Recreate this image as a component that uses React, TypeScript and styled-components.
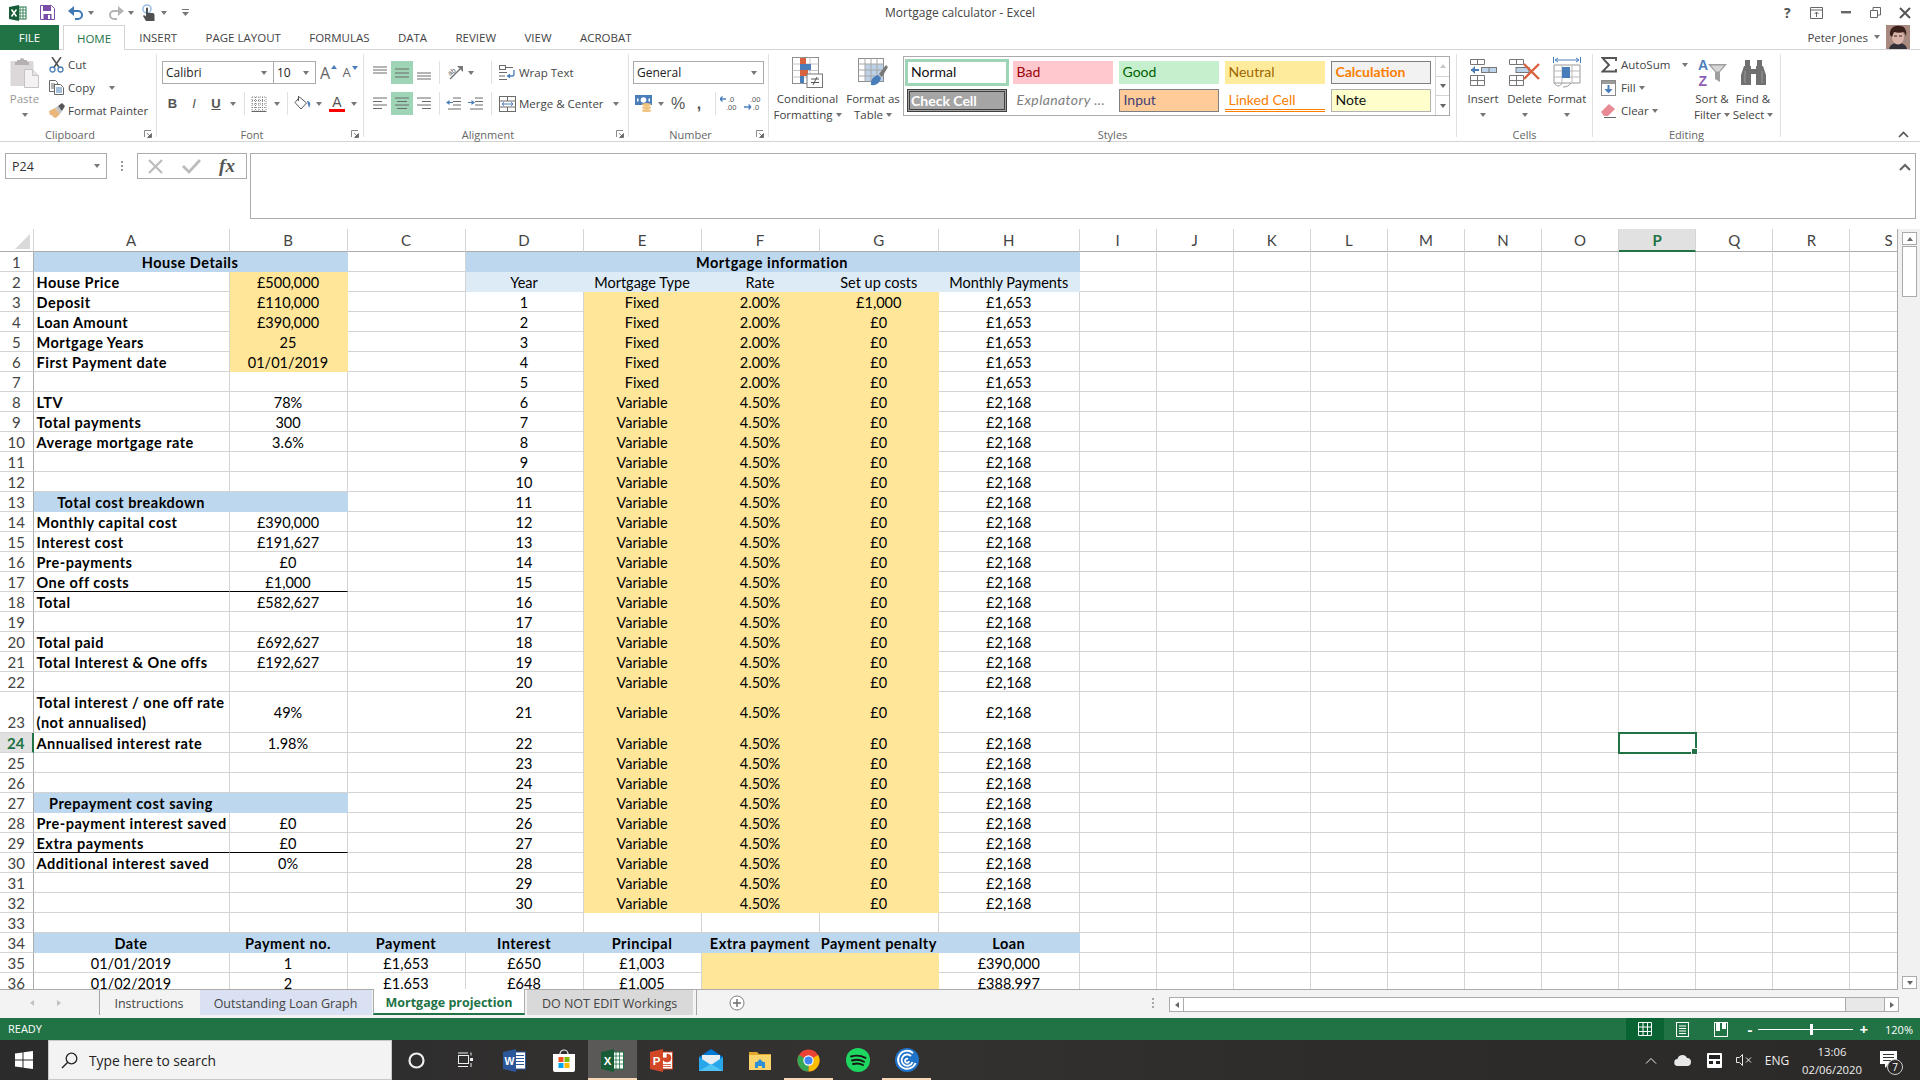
import React from "react";
import styled, { createGlobalStyle } from "styled-components";

const GlobalStyle = createGlobalStyle`
  html, body {
    margin: 0;
    padding: 0;
    width: 1920px;
    height: 1080px;
    overflow: hidden;
    background: #fff;
    font-family: "Open Sans", "Liberation Sans", sans-serif;
  }
  * { box-sizing: border-box; }
  svg { display: block; flex: none; }
`;

const GRID_LINE = "#d4d4d4";
const EDGE = "#ababab";
const GREEN = "#217346";
const INK = "#444";
const ICON_BLUE = "#4a7ebb";

/* ---------- icons ---------- */

const ExcelMark = () => (
  <svg width="18" height="16" viewBox="0 0 18 16">
    <rect x="8" y="2" width="9" height="12" fill="#fff" stroke={GREEN} />
    <path d="M11 2v12M14 2v12M8 5h9M8 8h9M8 11h9" stroke={GREEN} strokeWidth="0.8" />
    <path d="M0 2l10-2v16L0 14z" fill="#185c37" />
    <path d="M2.5 4.5l5 7M7.5 4.5l-5 7" stroke="#fff" strokeWidth="1.5" />
  </svg>
);

const SaveIcon = () => (
  <svg width="15" height="15" viewBox="0 0 15 15">
    <path d="M.5.5h11l3 3v11H.5z" fill="#fff" stroke="#7a4da8" />
    <rect x="3" y="1" width="8" height="5" fill="#7a4da8" />
    <rect x="3.5" y="9" width="8" height="5.5" fill="#7a4da8" />
    <rect x="8" y="10" width="2" height="4" fill="#fff" />
  </svg>
);

const ArrowBack = ({ color, flip }: { color: string; flip?: boolean }) => (
  <svg width="16" height="15" viewBox="0 0 16 15">
    <g transform={flip ? "translate(16 0) scale(-1 1)" : undefined}>
      <path d="M4 6h6a4 4 0 0 1 0 8H7" fill="none" stroke={color} strokeWidth="2" />
      <path d="M6 1v10L0 6z" fill={color} />
    </g>
  </svg>
);

const TouchIcon = () => (
  <svg width="15" height="18" viewBox="0 0 15 18">
    <circle cx="6" cy="5" r="4" fill="none" stroke="#9cc0e4" strokeWidth="1.6" />
    <path d="M5 4.5a1 1 0 0 1 2 0V9h4.5a2 2 0 0 1 2 2v6H5L2 12l1-1 2 1.5z" fill="#4f4f4f" />
  </svg>
);

const CustomizeMark = () => (
  <svg width="7" height="7" viewBox="0 0 7 7">
    <path d="M0 .5h7" stroke="#777" />
    <path d="M0 3h7L3.5 7z" fill="#777" />
  </svg>
);

const PasteIcon = () => (
  <svg width="29" height="30" viewBox="0 0 29 30">
    <rect x="0.5" y="3" width="23" height="25" rx="1" fill="#dcd8da" />
    <path d="M7 4V2h3a2 2 0 0 1 4 0h3v2h2v3H5V4z" fill="#b5b1b3" />
    <path d="M14.5 11.5h8l6 6v12h-14z" fill="#f4f2f3" stroke="#c6c3c5" />
    <path d="M22.5 11.5v6h6" fill="#e6e4e5" stroke="#c6c3c5" />
  </svg>
);

const CutIcon = () => (
  <svg width="15" height="16" viewBox="0 0 15 16">
    <path d="M3 0l7.5 11M12 0L4.5 11" stroke="#555" strokeWidth="1.6" />
    <circle cx="3.5" cy="12.5" r="2.5" fill="none" stroke={ICON_BLUE} strokeWidth="1.3" />
    <circle cx="11.5" cy="12.5" r="2.5" fill="none" stroke={ICON_BLUE} strokeWidth="1.3" />
  </svg>
);

const CopyIcon = () => (
  <svg width="15" height="15" viewBox="0 0 15 15">
    <path d="M.5.5h6l2 2v9H.5z" fill="#fff" stroke="#666" />
    <path d="M2 4h4M2 6h4M2 8h3" stroke="#666" />
    <path d="M5.5 4.5h6l3 3v7h-9z" fill="#fff" stroke="#666" />
    <path d="M7 8h6M7 10h6M7 12h6" stroke={ICON_BLUE} />
  </svg>
);

const BrushIcon = () => (
  <svg width="16" height="15" viewBox="0 0 16 15">
    <path d="M0 8l6-3 5 6-4 4-3-1-1-2-2 0z" fill="#e9b779" />
    <path d="M6 5l3-2 4 5-2 3z" fill="#c3c3c3" />
    <path d="M9 3l4-3 3 3-3 5z" fill="#555" />
  </svg>
);

const BordersIcon = () => (
  <svg width="16" height="16" viewBox="0 0 16 16">
    <path d="M1 1h14M1 8h14M1 15h14M1 1v14M8 1v14M15 1v14M4.5 1v14M11.5 1v14M1 4.5h14M1 11.5h14" stroke="#8a8a8a" strokeDasharray="1 1" />
    <path d="M.5 15.5h15" stroke="#666" />
  </svg>
);

const FillIcon = () => (
  <svg width="17" height="15" viewBox="0 0 17 15">
    <path d="M5.5 1L1 6.5 7 13l5.5-6z" fill="#fff" stroke="#555" />
    <path d="M4.5 0v5" stroke="#555" />
    <path d="M13 5a3 3 0 0 1 3 4l-1 3z" fill={ICON_BLUE} />
  </svg>
);

const AlignIcon = ({ lines }: { lines: [number, number, number][] }) => (
  <svg width="16" height="16" viewBox="0 0 16 16">
    {lines.map(([x1, x2, y]) => (
      <path key={`${x1}${y}`} d={`M${x1} ${y}h${x2 - x1}`} stroke="#6b6b6b" strokeWidth="1" />
    ))}
  </svg>
);

const OrientIcon = () => (
  <svg width="20" height="22" viewBox="0 0 20 22">
    <text x="3" y="12" fontSize="7" fill="#555" fontFamily="Liberation Sans" transform="rotate(-38 7 10)">ab</text>
    <path d="M5 17L16 6" stroke="#777" strokeWidth="1.5" />
    <path d="M12 4h6v6z" fill="#777" />
  </svg>
);

const IndentIcon = ({ dir }: { dir: "in" | "out" }) => (
  <svg width="16" height="14" viewBox="0 0 16 14">
    <path d="M7 1h8M7 4.5h8M7 8h8M2 12h13" stroke="#6b6b6b" />
    {dir === "out" ? (
      <path d="M7 5H3.5V3L0 5.5 3.5 8V6H7z" fill={ICON_BLUE} />
    ) : (
      <path d="M0 5h3.5V3L7 5.5 3.5 8V6H0z" fill={ICON_BLUE} />
    )}
  </svg>
);

const WrapIcon = () => (
  <svg width="17" height="16" viewBox="0 0 17 16">
    <rect x="0.5" y="0.5" width="6" height="4" fill="none" stroke="#6b6b6b" />
    <path d="M7 2.5h7M0 7.5h8M0 11h6M0 14.5h8" stroke="#6b6b6b" />
    <path d="M15 5v4a2 2 0 0 1-2 2h-3" fill="none" stroke={ICON_BLUE} strokeWidth="1.3" />
    <path d="M11 8.5v5L7.5 11z" fill={ICON_BLUE} />
  </svg>
);

const MergeIcon = () => (
  <svg width="17" height="16" viewBox="0 0 17 16">
    <rect x="0.5" y="0.5" width="16" height="15" fill="#fff" stroke="#6b6b6b" />
    <path d="M.5 5h16M.5 11h16M8.5.5V5M8.5 11v4.5" stroke="#6b6b6b" />
    <path d="M3 8h11M3 8l2-1.8M3 8l2 1.8M14 8l-2-1.8M14 8l-2 1.8" stroke={ICON_BLUE} fill="none" />
  </svg>
);

const CurrencyIcon = () => (
  <svg width="18" height="17" viewBox="0 0 18 17">
    <rect x="0" y="0" width="17" height="10" fill={ICON_BLUE} />
    <circle cx="8.5" cy="5" r="2.8" fill="#fff" />
    <rect x="2" y="3.5" width="1.5" height="3" fill="#fff" />
    <rect x="13.5" y="3.5" width="1.5" height="3" fill="#fff" />
    <ellipse cx="11.5" cy="9.5" rx="4.5" ry="1.5" fill="#efc27e" />
    <ellipse cx="11.5" cy="12.5" rx="4.5" ry="1.5" fill="#efc27e" />
    <ellipse cx="11.5" cy="15.5" rx="4.5" ry="1.5" fill="#efc27e" />
  </svg>
);

const DecimalIcon = ({ kind }: { kind: "more" | "less" }) => (
  <svg width="20" height="19" viewBox="0 0 20 19" fontFamily="Liberation Sans" fontSize="7.5" fill="#555">
    {kind === "more" ? (
      <>
        <path d="M0 5h6M0 5l2.5-2.5M0 5l2.5 2.5" stroke={ICON_BLUE} fill="none" strokeWidth="1.3" />
        <text x="8" y="8">.0</text>
        <text x="6" y="16">.00</text>
      </>
    ) : (
      <>
        <text x="6" y="8">.00</text>
        <path d="M0 13h7M7 13l-2.5-2.5M7 13l-2.5 2.5" stroke={ICON_BLUE} fill="none" strokeWidth="1.3" />
        <text x="9" y="16">.0</text>
      </>
    )}
  </svg>
);

const ConditionalIcon = () => (
  <svg width="31" height="31" viewBox="0 0 31 31">
    <rect x="0.5" y="0.5" width="26" height="26" fill="#fff" stroke="#8f8f8f" />
    <path d="M9 .5v26M18 .5v26M.5 7h26M.5 13.5h26M.5 20h26" stroke="#c4c4c4" />
    <rect x="8" y="1" width="6" height="6" fill="#d9633f" />
    <rect x="8" y="7" width="11" height="6" fill={ICON_BLUE} />
    <rect x="8" y="13" width="8" height="6" fill="#d9633f" />
    <rect x="8" y="19" width="4" height="7" fill={ICON_BLUE} />
    <rect x="15" y="17" width="15.5" height="13.5" fill="#fff" stroke="#777" />
    <path d="M19 22h8M19 25.5h8M25 20l-4 8" stroke="#555" />
  </svg>
);

const TableStyleIcon = () => (
  <svg width="30" height="29" viewBox="0 0 30 29">
    <rect x="0.5" y="0.5" width="25" height="23" fill="#fff" stroke="#8f8f8f" />
    <rect x="7" y="6" width="18" height="17" fill="#bcd0e6" />
    <path d="M7 .5v23M13 .5v23M19 .5v23M.5 6h25M.5 12h25M.5 18h25" stroke="#a8a8a8" />
    <path d="M13 25c0-5 4-7 7-8l3 3c-1 4-4 8-10 7z" fill={ICON_BLUE} />
    <path d="M21 16l7-9 2 2-6 10z" fill="#777" />
  </svg>
);

const InsertIcon = () => (
  <svg width="27" height="27" viewBox="0 0 27 27">
    <path d="M.5.5h14v5H.5zM7.5.5v5" fill="none" stroke="#777" />
    <path d="M.5 16.5h14v10H.5zM7.5 16.5v10M.5 21.5h14" fill="none" stroke="#777" />
    <rect x="11.5" y="8.5" width="15" height="5" fill="#bdd3ea" stroke="#777" />
    <path d="M19 8.5v5" stroke="#777" />
    <path d="M1 11h8" stroke={ICON_BLUE} strokeWidth="2" />
    <path d="M5 7v8l-4-4z" fill={ICON_BLUE} />
  </svg>
);

const DeleteIcon = () => (
  <svg width="31" height="27" viewBox="0 0 31 27">
    <path d="M.5.5h14v5H.5zM7.5.5v5" fill="none" stroke="#777" />
    <path d="M.5 16.5h14v10H.5zM7.5 16.5v10M.5 21.5h14" fill="none" stroke="#777" />
    <rect x="7" y="8.5" width="13" height="5" fill="#bdd3ea" stroke="#777" />
    <path d="M15 5l15 15M30 5L15 20" stroke="#d9633f" strokeWidth="2.4" />
  </svg>
);

const FormatCellIcon = () => (
  <svg width="28" height="31" viewBox="0 0 28 31">
    <path d="M2 3h24M2 3l3-2M2 3l3 2M26 3l-3-2M26 3l-3 2M.5 0v6M27.5 0v6" stroke={ICON_BLUE} fill="none" />
    <path d="M1 8h26v18H1z" fill="#fff" stroke="#999" />
    <path d="M9 8v18M19 8v18M1 14h26M1 20h26" stroke="#bbb" />
    <rect x="9" y="10" width="8" height="11" fill={ICON_BLUE} />
    <path d="M1 26c3 4 6 4 8 0M10 30c3 0 6-1 8-4" fill="none" stroke="#999" />
  </svg>
);

const SumIcon = () => (
  <svg width="16" height="16" viewBox="0 0 16 16">
    <path d="M15 4V1H1.5L8 8l-6.500 6.500H15V12" fill="none" stroke="#555" strokeWidth="1.9" />
  </svg>
);

const FillDownIcon = () => (
  <svg width="15" height="16" viewBox="0 0 15 16">
    <rect x="0.5" y="0.5" width="14" height="15" fill="#fff" stroke="#8a8a8a" />
    <rect x="1" y="1" width="13" height="3" fill="#9a9a9a" />
    <path d="M7.5 5v6" stroke={ICON_BLUE} strokeWidth="2" />
    <path d="M3.5 9h8l-4 4.5z" fill={ICON_BLUE} />
  </svg>
);

const EraserIcon = () => (
  <svg width="16" height="14" viewBox="0 0 16 14">
    <path d="M0 8l8-8 6 5-7 7H3z" fill="#e88a94" />
    <path d="M3 13.5h12" stroke="#666" />
  </svg>
);

const SortIcon = () => (
  <svg width="30" height="33" viewBox="0 0 30 33" fontFamily="Liberation Sans" fontWeight="700" fontSize="14">
    <text x="1" y="14" fill={ICON_BLUE}>A</text>
    <text x="1.5" y="30" fill="#8e5eb5">Z</text>
    <path d="M11 8h19l-7 8v10l-5-3v-7z" fill="#9e9e9e" />
    <path d="M14 9.5h13l-5 6h-3z" fill="#d6d6d6" />
  </svg>
);

const BinocularsIcon = () => (
  <svg width="25" height="27" viewBox="0 0 25 27">
    <path d="M4 1h5v6H4zM16 1h5v6h-5z" fill="#707070" />
    <path d="M3 7h7v3h5V7h7l3 9v10H15V15h-5v11H0V16z" fill="#707070" />
    <path d="M4 12v12M21 12v12" stroke="#9a9a9a" />
  </svg>
);

const Launcher = () => (
  <svg width="8" height="8" viewBox="0 0 8 8">
    <path d="M.5 7V.5H7" fill="none" stroke="#8a8a8a" />
    <path d="M3 3l3 3M7.5 3.5v4h-4z" stroke="#666" fill="#666" strokeWidth="0.8" />
  </svg>
);

const Avatar = () => (
  <svg width="24" height="24" viewBox="0 0 24 24">
    <rect width="24" height="24" fill="#a98a80" />
    <path d="M3 24c1-5 5-6 9-6s8 1 9 6z" fill="#34303a" />
    <ellipse cx="12" cy="12" rx="6" ry="7.5" fill="#d9b3a8" />
    <path d="M4 10C3 3 9 0 14 1c5 0 7 5 6 10l-2-4c-3 1-7 1-10 0l-2 5z" fill="#3a1f1a" />
    <path d="M8 11h3M13 11h3" stroke="#3a1f1a" />
  </svg>
);

const CornerMark = () => (
  <svg width="15" height="15" viewBox="0 0 15 15">
    <path d="M15 0v15H0z" fill="#d9d9d9" />
  </svg>
);

const TabPlus = () => (
  <svg width="16" height="16" viewBox="0 0 16 16">
    <circle cx="8" cy="8" r="7" fill="#fff" stroke="#7f7f7f" />
    <path d="M8 4v8M4 8h8" stroke="#6a6a6a" strokeWidth="1.4" />
  </svg>
);

const SheetViewNormal = () => (
  <svg width="14" height="14" viewBox="0 0 14 14">
    <path d="M.5.5h13v13H.5zM5 .5v13M9.5.5v13M.5 5h13M.5 9.5h13" fill="none" stroke="#fff" />
  </svg>
);

const SheetViewLayout = () => (
  <svg width="13" height="15" viewBox="0 0 13 15">
    <rect x="0.5" y="0.5" width="12" height="14" fill="none" stroke="#fff" />
    <path d="M3 4h7M3 6.5h7M3 9h7M3 11.5h7" stroke="#fff" />
  </svg>
);

const SheetViewBreak = () => (
  <svg width="14" height="15" viewBox="0 0 14 15">
    <rect x="0.5" y="0.5" width="13" height="14" fill="none" stroke="#fff" />
    <rect x="2" y="0" width="4" height="9" fill="#fff" />
    <rect x="8" y="0" width="4" height="7" fill="#fff" />
  </svg>
);

const WindowsLogo = () => (
  <svg width="18" height="18" viewBox="0 0 18 18">
    <path d="M0 2.5L7.5 1.4V8.6H0zM8.5 1.3L18 0v8.6H8.5zM0 9.5h7.5v7.1L0 15.5zM8.5 9.5H18V18l-9.5-1.3z" fill="#fff" />
  </svg>
);

const SearchGlass = () => (
  <svg width="17" height="17" viewBox="0 0 17 17">
    <circle cx="10.5" cy="6.5" r="5.3" fill="none" stroke="#222" strokeWidth="1.3" />
    <path d="M6.5 10.5L1 16" stroke="#222" strokeWidth="1.5" />
  </svg>
);

const CortanaRing = () => (
  <svg width="17" height="17" viewBox="0 0 17 17">
    <circle cx="8.5" cy="8.5" r="7" fill="none" stroke="#eee" strokeWidth="2.2" />
  </svg>
);

const TaskViewIcon = () => (
  <svg width="16" height="16" viewBox="0 0 16 16">
    <rect x="0.5" y="3.5" width="10" height="8" fill="none" stroke="#eee" />
    <path d="M0 1h10M0 14.5h10M13 .5v3M13 11v4" stroke="#eee" />
    <rect x="12" y="6" width="3" height="3" fill="#eee" />
  </svg>
);

const WordIcon = () => (
  <svg width="23" height="23" viewBox="0 0 23 23">
    <rect x="10" y="3" width="12.5" height="17" fill="#fff" stroke="#2b579a" />
    <path d="M12 6.5h9M12 9.5h9M12 12.5h9M12 15.5h9" stroke="#2b579a" />
    <path d="M0 3l13-3v23L0 20z" fill="#2b579a" />
    <text x="6.5" y="15.5" textAnchor="middle" fontSize="10.5" fontWeight="700" fill="#fff" fontFamily="Liberation Sans">W</text>
  </svg>
);

const StoreIcon = () => (
  <svg width="24" height="24" viewBox="0 0 24 24">
    <path d="M8 6a4 4 0 0 1 8 0" fill="none" stroke="#eee" strokeWidth="1.2" />
    <path d="M1 6h22v16a2 2 0 0 1-2 2H3a2 2 0 0 1-2-2z" fill="#fff" />
    <rect x="6.5" y="9" width="5" height="5" fill="#f25022" />
    <rect x="12.5" y="9" width="5" height="5" fill="#7fba00" />
    <rect x="6.5" y="15" width="5" height="5" fill="#00a4ef" />
    <rect x="12.5" y="15" width="5" height="5" fill="#ffb900" />
  </svg>
);

const ExcelTaskIcon = () => (
  <svg width="23" height="23" viewBox="0 0 23 23">
    <rect x="10" y="3" width="12.5" height="17" fill="#fff" stroke={GREEN} />
    <path d="M15 3v17M18.5 3v17M10 7h12M10 11h12M10 15h12" stroke={GREEN} strokeWidth="0.8" />
    <path d="M0 3l13-3v23L0 20z" fill="#185c37" />
    <text x="6.5" y="16" textAnchor="middle" fontSize="11.5" fontWeight="700" fill="#fff" fontFamily="Liberation Sans">X</text>
  </svg>
);

const PowerPointIcon = () => (
  <svg width="23" height="23" viewBox="0 0 23 23">
    <rect x="10" y="3" width="12.5" height="17" fill="#fff" stroke="#d24726" />
    <path d="M17 5a4 4 0 1 1-4 4h4zM13 15.5h8M13 17.5h8" fill="#d24726" stroke="#d24726" strokeWidth="0.8" />
    <path d="M0 3l13-3v23L0 20z" fill="#d24726" />
    <text x="6.5" y="16" textAnchor="middle" fontSize="11.5" fontWeight="700" fill="#fff" fontFamily="Liberation Sans">P</text>
  </svg>
);

const MailIcon = () => (
  <svg width="24" height="22" viewBox="0 0 24 22">
    <path d="M0 8L12 0l12 8v14H0z" fill="#0078d4" />
    <path d="M3 6h18v6l-9 5-9-5z" fill="#e8edf2" />
    <path d="M0 8l12 8 12-8v14H0z" fill="#28a8ea" />
    <path d="M0 22l12-7 12 7z" fill="#50c4f5" />
  </svg>
);

const FolderIcon = () => (
  <svg width="22" height="19" viewBox="0 0 22 19">
    <path d="M0 1h8l2 2h12v16H0z" fill="#e0a92c" />
    <rect x="0" y="4" width="22" height="15" fill="#fbd56c" />
    <rect x="6" y="11" width="10" height="6" fill="#2f8fd8" />
    <rect x="9" y="15" width="4" height="4" fill="#fbd56c" />
    <path d="M8 11l3-3 3 3z" fill="#2f8fd8" />
  </svg>
);

const ChromeIcon = () => (
  <svg width="23" height="23" viewBox="0 0 24 24">
    <circle cx="12" cy="12" r="11.5" fill="#ea4335" />
    <path d="M12 12L21.96 6.25A11.5 11.5 0 0 1 12 23.5z" fill="#fbbc04" />
    <path d="M12 12V23.5A11.5 11.5 0 0 1 2.04 6.25z" fill="#34a853" />
    <circle cx="12" cy="12" r="5.4" fill="#fff" />
    <circle cx="12" cy="12" r="4.2" fill="#4285f4" />
  </svg>
);

const SpotifyIcon = () => (
  <svg width="24" height="24" viewBox="0 0 24 24">
    <circle cx="12" cy="12" r="12" fill="#1ed760" />
    <path d="M5 8.5c5-1.5 10-1 14.5 1.300M6 12.5c4-1.200 8.500-.8 12 1.200M7 16c3.500-.9 7-.6 10 1" fill="none" stroke="#191414" strokeWidth="1.9" strokeLinecap="round" />
  </svg>
);

const SwirlIcon = () => (
  <svg width="24" height="24" viewBox="0 0 24 24">
    <circle cx="12" cy="12" r="12" fill="#1f73c9" />
    <path d="M18 5A9 9 0 1 0 20.5 15M16 8a5.6 5.6 0 1 0 1.5 6M13 11a2 2 0 1 0 1 2" fill="none" stroke="#fff" strokeWidth="1.9" />
  </svg>
);

const TrayCloud = () => (
  <svg width="17" height="14" viewBox="0 0 17 14">
    <path d="M4 13a3.5 3.5 0 0 1-.5-7A5 5 0 0 1 13 5a4 4 0 0 1 0 8z" fill="#e8e8e8" />
  </svg>
);

const TrayMeter = () => (
  <svg width="15" height="15" viewBox="0 0 15 15">
    <rect width="15" height="15" rx="1" fill="#fff" />
    <rect x="2" y="2" width="11" height="4" fill="#222" />
    <rect x="2" y="8" width="4" height="3" fill="#222" />
    <rect x="9" y="8" width="4" height="3" fill="#222" />
  </svg>
);

const TraySound = () => (
  <svg width="16" height="14" viewBox="0 0 16 14">
    <path d="M.5 4.5h3l3-3v11l-3-3h-3z" fill="none" stroke="#e8e8e8" />
    <path d="M10 4.5l5 5M15 4.5l-5 5" stroke="#e8e8e8" />
  </svg>
);

const TrayNote = () => (
  <svg width="17" height="19" viewBox="0 0 17 19">
    <path d="M0 0h17v13H9l-4 4v-4H0z" fill="#fff" />
    <path d="M3 3.5h11M3 6.5h11M3 9.5h11" stroke="#333" />
  </svg>
);

/* ---------- window chrome ---------- */

const Page = styled.div`
  width: 1920px;
  height: 1080px;
  display: flex;
  flex-direction: column;
  background: #fff;
  overflow: hidden;
`;

const TitleBar = styled.div`
  height: 25px;
  display: grid;
  grid-template-columns: 1fr auto 1fr;
  align-items: center;
  font-size: 12px;
  color: ${INK};
`;

const QuickAccess = styled.div`
  display: flex;
  align-items: center;
  padding-left: 9px;
`;

const QuickSlot = styled.div<{ $w: number }>`
  width: ${(p) => p.$w}px;
  height: 25px;
  display: flex;
  align-items: center;
  justify-content: center;
`;

const WindowControls = styled.div`
  display: flex;
  justify-content: flex-end;
  align-items: center;
`;

const WindowButton = styled.div`
  width: 29.5px;
  display: flex;
  justify-content: center;
  color: #555;
  font-weight: 700;
  font-size: 14px;
`;

const TabRow = styled.div`
  height: 25px;
  display: flex;
  align-items: stretch;
  border-bottom: 1px solid ${GRID_LINE};
  font-size: 11.5px;
  color: ${INK};
`;

const FileTab = styled.div`
  width: 59px;
  height: 25px;
  display: flex;
  align-items: center;
  justify-content: center;
  background: ${GREEN};
  color: #fff;
  margin-right: 4px;
`;

const RibbonTab = styled.div<{ $active?: boolean }>`
  display: flex;
  align-items: center;
  padding: 0 14.2px;
  height: 25px;
  ${(p) =>
    p.$active &&
    `
    width: 62px;
    padding: 0;
    justify-content: center;
    background: #fff;
    color: ${GREEN};
    border: 1px solid ${GRID_LINE};
    border-bottom: none;
  `}
`;

const UserArea = styled.div`
  margin-left: auto;
  display: flex;
  align-items: center;
  padding-right: 10px;
  gap: 6px;
  font-size: 11.5px;
`;

const Ribbon = styled.div`
  height: 92px;
  display: flex;
  align-items: stretch;
  border-bottom: 1px solid ${GRID_LINE};
  font-size: 11.5px;
  color: ${INK};
`;

const Group = styled.section<{ $w: number }>`
  width: ${(p) => p.$w}px;
  margin: 4px 0;
  display: flex;
  flex-direction: column;
  border-right: 1px solid #e1e1e1;
`;

const GroupBody = styled.div<{ $pad?: number }>`
  flex: none;
  height: 72px;
  display: flex;
  padding-left: ${(p) => p.$pad ?? 0}px;
`;

const GroupFoot = styled.div`
  flex: none;
  height: 11px;
  display: flex;
  align-items: center;
  color: #666;
  font-size: 11px;
  padding-top: 5px;
  svg {
    margin-right: 4px;
  }
`;

const GroupName = styled.span<{ $launcher?: boolean }>`
  flex: 1;
  text-align: center;
  padding-right: ${(p) => (p.$launcher ? 4 : 0)}px;
`;

const TwoRows = styled.div`
  display: flex;
  flex-direction: column;
  gap: 8px;
  padding-top: 7px;
`;

const ThreeRows = styled.div<{ $w?: number }>`
  display: flex;
  flex-direction: column;
  margin-top: -1px;
  ${(p) => p.$w && `width: ${p.$w}px;`}
`;

const ToolRow = styled.div`
  height: 23px;
  display: flex;
  align-items: center;
`;

const ToolBtn = styled.div<{ $w: number; $on?: boolean }>`
  width: ${(p) => p.$w}px;
  height: 23px;
  display: flex;
  align-items: center;
  justify-content: center;
  flex: none;
  background: ${(p) => (p.$on ? "#9fd5b7" : "transparent")};
`;

const ToolText = styled.span<{ $l?: number }>`
  margin-left: ${(p) => p.$l ?? 4}px;
  white-space: nowrap;
`;

const Caret = styled.span<{ $l?: number }>`
  display: inline-block;
  flex: none;
  width: 0;
  height: 0;
  margin-left: ${(p) => p.$l ?? 0}px;
  border-left: 3.5px solid transparent;
  border-right: 3.5px solid transparent;
  border-top: 4px solid #777;
`;

const VDivider = styled.span<{ $l: number; $r: number }>`
  flex: none;
  width: 1px;
  height: 23px;
  background: #e1e1e1;
  margin-left: ${(p) => p.$l}px;
  margin-right: ${(p) => p.$r}px;
`;

const ComboBox = styled.div<{ $w: number }>`
  width: ${(p) => p.$w}px;
  height: 23px;
  display: flex;
  align-items: center;
  justify-content: space-between;
  padding: 0 6px 0 3px;
  border: 1px solid ${EDGE};
  background: #fff;
  color: #222;
  font-size: 12px;
  & + & {
    margin-left: -1px;
  }
`;

const FontGlyph = styled.span<{ $size?: number; $italic?: boolean; $bold?: boolean; $under?: boolean }>`
  font-size: ${(p) => p.$size ?? 13}px;
  font-style: ${(p) => (p.$italic ? "italic" : "normal")};
  font-weight: ${(p) => (p.$bold ? 700 : 400)};
  text-decoration: ${(p) => (p.$under ? "underline" : "none")};
  color: #555;
  font-family: "Liberation Sans", sans-serif;
  line-height: 1;
`;

const GrowFont = styled.span<{ $size: number; $down?: boolean }>`
  display: flex;
  align-items: flex-end;
  font-family: "Open Sans", sans-serif;
  font-size: ${(p) => p.$size}px;
  color: #666;
  line-height: 1;
  &::after {
    content: "";
    align-self: flex-start;
    margin-left: 1px;
    border-left: 3px solid transparent;
    border-right: 3px solid transparent;
    ${(p) =>
      p.$down ? `border-top: 4px solid ${ICON_BLUE};` : `border-bottom: 4px solid ${ICON_BLUE};`}
  }
`;

const FontColor = styled.span`
  display: flex;
  flex-direction: column;
  align-items: center;
  font-family: "Liberation Sans", sans-serif;
  font-size: 14px;
  line-height: 13px;
  color: #555;
  &::after {
    content: "";
    width: 16px;
    height: 3px;
    background: #f00;
  }
`;

const BigBtn = styled.div<{ $w: number; $faded?: boolean }>`
  width: ${(p) => p.$w}px;
  flex: none;
  display: flex;
  flex-direction: column;
  align-items: center;
  color: ${(p) => (p.$faded ? "#9a9a9a" : INK)};
`;

const BigIcon = styled.div`
  height: 37px;
  display: flex;
  align-items: center;
  justify-content: center;
`;

const BigLabel = styled.div`
  height: 16px;
  line-height: 16px;
  display: flex;
  align-items: center;
  gap: 3px;
  white-space: nowrap;
`;

const Gallery = styled.div`
  width: 547px;
  height: 60px;
  margin-top: 2px;
  display: flex;
  border: 1px solid ${EDGE};
  background: #fff;
`;

const StyleGrid = styled.div`
  flex: none;
  width: 531px;
  padding: 4px 0 0 3px;
  display: grid;
  grid-template-columns: repeat(5, 100px);
  grid-template-rows: 23px 23px;
  gap: 5px 6px;
`;

const StyleSwatch = styled.div<{
  $bg?: string;
  $fg?: string;
  $bd?: string;
  $bold?: boolean;
  $italic?: boolean;
}>`
  display: flex;
  align-items: center;
  padding: 0 0 3px 3.5px;
  font-family: "Lato", sans-serif;
  font-size: 14px;
  white-space: nowrap;
  overflow: hidden;
  background: ${(p) => p.$bg ?? "transparent"};
  color: ${(p) => p.$fg ?? "#111"};
  border: ${(p) => p.$bd ?? "none"};
  font-weight: ${(p) => (p.$bold ? 700 : 400)};
  font-style: ${(p) => (p.$italic ? "italic" : "normal")};
  letter-spacing: ${(p) => (p.$italic ? "0.4px" : "0")};
`;

const NormalSwatch = styled(StyleSwatch)`
  background: #fff;
  outline: 3px solid #9fd5b7;
  outline-offset: -1px;
  padding-left: 4px;
`;

const CheckSwatch = styled(StyleSwatch)`
  background: #a5a5a5;
  color: #fff;
  font-weight: 700;
  border: 3px double #3f3f3f;
  padding: 0 0 1px 1px;
`;

const LinkedSwatch = styled(StyleSwatch)`
  color: #fa7d00;
  border-bottom: 3px double #ff8001;
  padding-bottom: 0;
`;

const GalleryArrows = styled.div`
  flex: 1;
  display: flex;
  flex-direction: column;
  border-left: 1px solid ${GRID_LINE};
`;

const GalleryArrow = styled.div<{ $up?: boolean }>`
  flex: 1;
  display: flex;
  align-items: center;
  justify-content: center;
  & + & {
    border-top: 1px solid ${GRID_LINE};
  }
  &::before {
    content: "";
    border-left: 3.5px solid transparent;
    border-right: 3.5px solid transparent;
    ${(p) => (p.$up ? "border-bottom: 4px solid #c8c8c8;" : "border-top: 4px solid #666;")}
  }
`;

const CollapseChevron = styled.div`
  margin-left: auto;
  align-self: flex-end;
  margin-bottom: 3px;
  margin-right: 11px;
`;

/* ---------- formula bar ---------- */

const FormulaBar = styled.div`
  height: 87px;
  display: flex;
  align-items: flex-start;
  padding: 11px 4px 0 5px;
  background: #fff;
`;

const NameBox = styled.div`
  width: 102px;
  height: 26px;
  display: flex;
  align-items: center;
  justify-content: space-between;
  padding: 0 6px;
  border: 1px solid ${EDGE};
  font-size: 12.5px;
  color: #333;
`;

const GripDots = styled.div`
  width: 30px;
  height: 26px;
  display: flex;
  flex-direction: column;
  align-items: center;
  justify-content: center;
  gap: 2px;
  span {
    width: 2px;
    height: 2px;
    background: #9a9a9a;
  }
`;

const FormulaButtons = styled.div`
  width: 110px;
  height: 26px;
  display: flex;
  align-items: center;
  justify-content: space-around;
  padding: 0 2px 0 0;
  border: 1px solid ${EDGE};
`;

const FxMark = styled.span`
  font-family: "Liberation Serif", serif;
  font-style: italic;
  font-weight: 700;
  font-size: 19px;
  color: #555;
`;

const FormulaInput = styled.div`
  flex: 1;
  height: 66px;
  margin-left: 3px;
  display: flex;
  justify-content: flex-end;
  padding: 9px 4px 0 0;
  border: 1px solid ${EDGE};
`;

/* ---------- sheet ---------- */

const SheetArea = styled.div`
  height: 761px;
  display: flex;
`;

const Sheet = styled.div`
  width: 1898px;
  height: 761px;
  overflow: hidden;
  display: grid;
  grid-template-columns: 33.5px 196px 118px 118px 118px 118px 118px 119.5px 140.5px repeat(10, 77.1px) 48.5px;
  grid-template-rows: 23px repeat(22, 20px) 41px repeat(13, 20px);
  font-family: "Lato", "Liberation Sans", sans-serif;
  border-right: 1px solid ${EDGE};
  border-bottom: 1px solid ${EDGE};
`;

const Corner = styled.div`
  display: flex;
  align-items: flex-end;
  justify-content: flex-end;
  padding: 0 3px 2px 0;
  border-bottom: 1px solid ${EDGE};
  border-right: 1px solid ${GRID_LINE};
`;

/* the last column runs past the grid's edge, so its letter sits off-centre */
const ColHead = styled.div<{ $on?: boolean; $cut?: boolean }>`
  display: flex;
  align-items: center;
  justify-content: center;
  padding-left: ${(p) => (p.$cut ? 28 : 0)}px;
  font-size: 15px;
  border-right: ${(p) => (p.$cut ? "none" : `1px solid ${GRID_LINE}`)};
  border-bottom: ${(p) => (p.$on ? `2px solid ${GREEN}` : `1px solid ${EDGE}`)};
  background: ${(p) => (p.$on ? "#e1e1e1" : "#fff")};
  color: ${(p) => (p.$on ? GREEN : INK)};
  font-weight: ${(p) => (p.$on ? 700 : 400)};
`;

const RowHead = styled.div<{ $on?: boolean; $tall?: boolean }>`
  display: flex;
  align-items: ${(p) => (p.$tall ? "flex-end" : "center")};
  justify-content: center;
  padding-top: 1px;
  font-size: 15px;
  border-bottom: 1px solid ${GRID_LINE};
  border-right: ${(p) => (p.$on ? `2px solid ${GREEN}` : `1px solid ${EDGE}`)};
  background: ${(p) => (p.$on ? "#e1e1e1" : "#fff")};
  color: ${(p) => (p.$on ? GREEN : INK)};
  font-weight: ${(p) => (p.$on ? 700 : 400)};
  line-height: 19px;
`;

const FILLS = { blue: "#bdd7ee", light: "#ddebf7", yellow: "#ffe699" };
type Fill = keyof typeof FILLS;

const Cell = styled.div<{
  $fill?: Fill;
  $bold?: boolean;
  $left?: boolean;
  $span?: number;
  $rule?: boolean;
  $picked?: boolean;
}>`
  position: relative;
  display: flex;
  align-items: center;
  justify-content: ${(p) => (p.$left ? "flex-start" : "center")};
  padding: 2px 0 0 ${(p) => (p.$left ? 3 : 0)}px;
  ${(p) => p.$span && `grid-column: span ${p.$span};`}
  font-size: 14.5px;
  line-height: 20px;
  color: #000;
  white-space: nowrap;
  font-weight: ${(p) => (p.$bold ? 700 : 400)};
  letter-spacing: ${(p) => (p.$bold ? "0.5px" : "0")};
  background: ${(p) => (p.$fill ? FILLS[p.$fill] : "#fff")};
  border-right: 1px solid ${(p) => (p.$fill ? "transparent" : GRID_LINE)};
  border-bottom: 1px solid ${(p) => (p.$rule ? "#000" : p.$fill ? "transparent" : GRID_LINE)};
  ${(p) =>
    p.$picked &&
    `
    outline: 2px solid ${GREEN};
    outline-offset: -1px;
    z-index: 1;
    &::after {
      content: "";
      position: absolute;
      right: -3px;
      bottom: -3px;
      width: 5px;
      height: 5px;
      background: ${GREEN};
      border: 1px solid #fff;
    }
  `}
`;

const VScroll = styled.div`
  flex: 1;
  display: flex;
  flex-direction: column;
  padding: 3px 3px 1px 4px;
  background: #f1f1f1;
`;

const ScrollArrow = styled.div<{ $down?: boolean }>`
  height: 13px;
  display: flex;
  align-items: center;
  justify-content: center;
  background: #fff;
  border: 1px solid ${EDGE};
  &::before {
    content: "";
    border-left: 3.5px solid transparent;
    border-right: 3.5px solid transparent;
    ${(p) => (p.$down ? "border-top: 4px solid #666;" : "border-bottom: 4px solid #666;")}
  }
`;

const ScrollThumb = styled.div`
  height: 51px;
  margin-top: 1px;
  margin-bottom: auto;
  background: #fff;
  border: 1px solid ${EDGE};
`;

/* ---------- sheet tabs & status ---------- */

const TabsBar = styled.div`
  height: 28px;
  display: flex;
  background: #f3f3f3;
  font-size: 12.5px;
  color: ${INK};
`;

const TabNav = styled.div`
  width: 100px;
  height: 25px;
  display: flex;
  align-items: center;
  justify-content: space-around;
  padding: 0 26px 0 18px;
  border-right: 1px solid #a6a6a6;
`;

const NavArrow = styled.span<{ $right?: boolean }>`
  border-top: 3.5px solid transparent;
  border-bottom: 3.5px solid transparent;
  ${(p) => (p.$right ? "border-left: 4px solid #c0c0c0;" : "border-right: 4px solid #c0c0c0;")}
`;

const SheetTab = styled.div<{ $bg?: string; $w: number; $active?: boolean }>`
  width: ${(p) => p.$w}px;
  height: 25px;
  margin-right: 1.5px;
  padding-top: 1px;
  display: flex;
  align-items: center;
  justify-content: center;
  white-space: nowrap;
  background: ${(p) => (p.$active ? "#fff" : p.$bg ?? "transparent")};
  ${(p) =>
    p.$active &&
    `
    color: ${GREEN};
    font-weight: 700;
    border-bottom: 2px solid ${GREEN};
    border-left: 1px solid ${EDGE};
    border-right: 1px solid ${EDGE};
    margin-top: -1px;
    height: 26px;
    padding-top: 2px;
  `}
`;

const TabEnd = styled.div`
  width: 1px;
  height: 25px;
  background: #a6a6a6;
  margin-left: 2px;
`;

const AddSheet = styled.div`
  width: 80px;
  height: 25px;
  display: flex;
  align-items: center;
  justify-content: center;
`;

const SplitDots = styled.div`
  margin-left: auto;
  width: 32px;
  height: 25px;
  display: flex;
  flex-direction: column;
  align-items: center;
  justify-content: center;
  gap: 2px;
  span {
    width: 2px;
    height: 2px;
    background: #a6a6a6;
  }
`;

const HScroll = styled.div`
  width: 730px;
  height: 15px;
  margin: 7px 21px 0 0;
  display: flex;
  background: #e8e8e8;
  border: 1px solid ${EDGE};
`;

const HScrollBtn = styled.div<{ $right?: boolean }>`
  width: 14px;
  display: flex;
  align-items: center;
  justify-content: center;
  background: #fff;
  ${(p) => (p.$right ? `border-left: 1px solid ${EDGE};` : `border-right: 1px solid ${EDGE};`)}
  &::before {
    content: "";
    border-top: 3.5px solid transparent;
    border-bottom: 3.5px solid transparent;
    ${(p) => (p.$right ? "border-left: 4px solid #666;" : "border-right: 4px solid #666;")}
  }
`;

const HScrollThumb = styled.div`
  width: 662px;
  background: #fff;
  border-right: 1px solid ${EDGE};
  margin-right: auto;
`;

const StatusBar = styled.div`
  height: 22px;
  display: flex;
  align-items: center;
  background: ${GREEN};
  color: #fff;
  font-size: 11px;
  padding-left: 8px;
`;

const ReadyLabel = styled.span`
  padding-bottom: 2px;
`;

const ViewBtn = styled.div<{ $on?: boolean }>`
  width: 38px;
  height: 22px;
  display: flex;
  align-items: center;
  justify-content: center;
  background: ${(p) => (p.$on ? "#0a6332" : "transparent")};
`;

const ZoomArea = styled.div`
  margin-left: auto;
  display: flex;
  align-items: center;
`;

const ZoomTrack = styled.div`
  width: 95px;
  height: 1px;
  margin: 0 6px;
  background: #fff;
  display: flex;
  align-items: center;
  padding-left: 52px;
  &::after {
    content: "";
    width: 3px;
    height: 11px;
    background: #fff;
  }
`;

const ZoomSign = styled.span<{ $l?: number }>`
  margin-left: ${(p) => p.$l ?? 0}px;
  font-size: 15px;
  font-weight: 700;
  line-height: 1;
`;

const ZoomLabel = styled.span`
  width: 52px;
  padding-right: 7px;
  text-align: right;
  font-size: 11px;
`;

/* ---------- taskbar ---------- */

const Taskbar = styled.div`
  height: 40px;
  display: flex;
  align-items: stretch;
  background: linear-gradient(90deg, #2b2b2b 0%, #343231 45%, #2e2c2a 70%, #2b2a29 100%);
`;

const StartBtn = styled.div`
  width: 48px;
  display: flex;
  align-items: center;
  justify-content: center;
`;

const SearchBox = styled.div`
  width: 344px;
  display: flex;
  align-items: center;
  gap: 11px;
  padding-left: 12px;
  background: #f3f3f3;
  border: 1px solid #c8c8c8;
  font-size: 13.8px;
  color: #222;
`;

const TaskSlot = styled.div<{ $on?: boolean; $open?: boolean }>`
  position: relative;
  width: 49px;
  display: flex;
  align-items: center;
  justify-content: center;
  background: ${(p) => (p.$on ? "#5a5957" : "transparent")};
  ${(p) =>
    p.$open &&
    `
    &::after {
      content: "";
      position: absolute;
      left: 0;
      right: 0;
      bottom: 0;
      height: 2px;
      background: #f7d7b5;
    }
  `}
`;

const Tray = styled.div`
  margin-left: auto;
  display: flex;
  align-items: center;
  color: #eee;
  font-size: 12px;
  padding-right: 17px;
`;

const TrayItem = styled.div<{ $w: number }>`
  width: ${(p) => p.$w}px;
  display: flex;
  align-items: center;
  justify-content: center;
`;

const ClockBlock = styled.div`
  width: 72px;
  display: flex;
  flex-direction: column;
  align-items: center;
  gap: 3px;
  font-size: 11.3px;
  line-height: 15px;
`;

const NoteBadge = styled.div`
  position: relative;
  width: 30px;
  margin-left: 5px;
  display: flex;
  justify-content: center;
`;

const NoteCount = styled.span`
  position: absolute;
  right: 0;
  bottom: -5px;
  width: 16px;
  height: 16px;
  border-radius: 50%;
  border: 1px solid #ccc;
  background: #2b2a29;
  font-size: 10px;
  line-height: 14px;
  text-align: center;
  color: #fff;
`;

/* ---------- data ---------- */

const COLUMNS = ["A", "B", "C", "D", "E", "F", "G", "H", "I", "J", "K", "L", "M", "N", "O", "P", "Q", "R", "S"];

type CellDef = {
  text?: React.ReactNode;
  fill?: Fill;
  bold?: boolean;
  left?: boolean;
  span?: number;
  rule?: boolean;
};

const LEFT_BLOCK: Record<number, [React.ReactNode, string, Fill?, boolean?]> = {
  2: ["House Price", "£500,000", "yellow"],
  3: ["Deposit", "£110,000", "yellow"],
  4: ["Loan Amount", "£390,000", "yellow"],
  5: ["Mortgage Years", "25", "yellow"],
  6: ["First Payment date", "01/01/2019", "yellow"],
  8: ["LTV", "78%"],
  9: ["Total payments", "300"],
  10: ["Average mortgage rate", "3.6%"],
  14: ["Monthly capital cost", "£390,000"],
  15: ["Interest cost", "£191,627"],
  16: ["Pre-payments", "£0"],
  17: ["One off costs", "£1,000", undefined, true],
  18: ["Total", "£582,627"],
  20: ["Total paid", "£692,627"],
  21: ["Total Interest & One offs", "£192,627"],
  23: [
    <span key="t">
      Total interest / one off rate
      <br />
      (not annualised)
    </span>,
    "49%",
  ],
  24: ["Annualised interest rate", "1.98%"],
  28: ["Pre-payment interest saved", "£0"],
  29: ["Extra payments", "£0", undefined, true],
  30: ["Additional interest saved", "0%"],
};

const SECTION_TITLES: Record<number, string> = {
  13: "Total cost breakdown",
  27: "Prepayment cost saving",
};

const LOWER_TABLE: Record<number, string[]> = {
  35: ["01/01/2019", "1", "£1,653", "£650", "£1,003", "", "", "£390,000"],
  36: ["01/02/2019", "2", "£1,653", "£648", "£1,005", "", "", "£388,997"],
};

const LOWER_HEAD = ["Date", "Payment no.", "Payment", "Interest", "Principal", "Extra payment", "Payment penalty", "Loan"];
const MID_HEAD = ["Year", "Mortgage Type", "Rate", "Set up costs", "Monthly Payments"];

function buildRow(r: number): CellDef[] {
  if (r === 34) return LOWER_HEAD.map((text) => ({ text, fill: "blue" as Fill, bold: true }));
  if (LOWER_TABLE[r]) {
    return LOWER_TABLE[r].map((text, i) => ({ text, fill: i === 5 || i === 6 ? ("yellow" as Fill) : undefined }));
  }

  const row: CellDef[] = [];
  if (r === 1) {
    row.push({ text: "House Details", fill: "blue", bold: true, span: 2 });
  } else if (SECTION_TITLES[r]) {
    row.push({ text: SECTION_TITLES[r], fill: "blue", bold: true }, { fill: "blue" });
  } else if (LEFT_BLOCK[r]) {
    const [label, value, fill, rule] = LEFT_BLOCK[r];
    row.push({ text: label, bold: true, left: true, rule }, { text: value, fill, rule });
  } else {
    row.push({}, {});
  }
  row.push({});

  if (r === 1) {
    row.push({ text: "Mortgage information", fill: "blue", bold: true, span: 5 });
  } else if (r === 2) {
    MID_HEAD.forEach((text) => row.push({ text, fill: "light" }));
  } else if (r <= 32) {
    const fixed = r <= 7;
    row.push(
      { text: String(r - 2) },
      { text: fixed ? "Fixed" : "Variable", fill: "yellow" },
      { text: fixed ? "2.00%" : "4.50%", fill: "yellow" },
      { text: r === 3 ? "£1,000" : "£0", fill: "yellow" },
      { text: fixed ? "£1,653" : "£2,168" },
    );
  } else {
    row.push({}, {}, {}, {}, {});
  }
  return row;
}

const RIBBON_TABS = ["INSERT", "PAGE LAYOUT", "FORMULAS", "DATA", "REVIEW", "VIEW", "ACROBAT"];

const ALIGN_V: [number, number, number][][] = [
  [[1, 15, 2], [1, 15, 5], [1, 15, 8]],
  [[1, 15, 4], [1, 15, 8], [1, 15, 12]],
  [[1, 15, 8], [1, 15, 11], [1, 15, 14]],
];
const ALIGN_H: [number, number, number][][] = [
  [[1, 15, 2], [1, 10, 5.5], [1, 15, 9], [1, 10, 12.5]],
  [[1, 15, 2], [3, 13, 5.5], [1, 15, 9], [3, 13, 12.5]],
  [[1, 15, 2], [6, 15, 5.5], [1, 15, 9], [6, 15, 12.5]],
];

const SHEET_TABS = [
  { name: "Instructions", w: 98 },
  { name: "Outstanding Loan Graph", w: 172, bg: "#d9e1f2" },
  { name: "Mortgage projection", w: 152, active: true },
  { name: "DO NOT EDIT Workings", w: 166, bg: "#d9d9d9" },
];

const App = () => {
  return (
    <Page>
      <GlobalStyle />
      <TitleBar>
        <QuickAccess>
          <QuickSlot $w={18}><ExcelMark /></QuickSlot>
          <QuickSlot $w={40}><SaveIcon /></QuickSlot>
          <QuickSlot $w={18}><ArrowBack color="#3f78b5" /></QuickSlot>
          <QuickSlot $w={12}><Caret /></QuickSlot>
          <QuickSlot $w={8} />
          <QuickSlot $w={22}><ArrowBack color="#b5b5b5" flip /></QuickSlot>
          <QuickSlot $w={8}><Caret /></QuickSlot>
          <QuickSlot $w={26}><TouchIcon /></QuickSlot>
          <QuickSlot $w={6}><Caret /></QuickSlot>
          <QuickSlot $w={36}><CustomizeMark /></QuickSlot>
        </QuickAccess>
        <span>Mortgage calculator - Excel</span>
        <WindowControls>
          <WindowButton>?</WindowButton>
          <WindowButton>
            <svg width="13" height="12" viewBox="0 0 13 12">
              <path d="M.5.5h12v11H.5zM.5 3h12M6.5 10V5M4.5 7l2-2 2 2" fill="none" stroke="#666" />
            </svg>
          </WindowButton>
          <WindowButton>
            <svg width="10" height="3" viewBox="0 0 10 3"><rect width="10" height="2.4" fill="#666" /></svg>
          </WindowButton>
          <WindowButton>
            <svg width="11" height="11" viewBox="0 0 11 11">
              <path d="M.5 3.5h7v7h-7zM3 3V.5h7.5V8H8" fill="none" stroke="#666" />
            </svg>
          </WindowButton>
          <WindowButton>
            <svg width="12" height="12" viewBox="0 0 12 12"><path d="M1 1l10 10M11 1L1 11" stroke="#555" strokeWidth="2" /></svg>
          </WindowButton>
        </WindowControls>
      </TitleBar>

      <TabRow>
        <FileTab>FILE</FileTab>
        <RibbonTab $active>HOME</RibbonTab>
        {RIBBON_TABS.map((t) => (
          <RibbonTab key={t}>{t}</RibbonTab>
        ))}
        <UserArea>
          Peter Jones
          <Caret />
          <Avatar />
        </UserArea>
      </TabRow>

      <Ribbon>
        <Group $w={157}>
          <GroupBody>
            <BigBtn $w={49} $faded>
              <BigIcon><PasteIcon /></BigIcon>
              <BigLabel>Paste</BigLabel>
              <BigLabel><Caret /></BigLabel>
            </BigBtn>
            <ThreeRows>
              <ToolRow><CutIcon /><ToolText>Cut</ToolText></ToolRow>
              <ToolRow><CopyIcon /><ToolText>Copy</ToolText><Caret $l={14} /></ToolRow>
              <ToolRow><BrushIcon /><ToolText $l={3}>Format Painter</ToolText></ToolRow>
            </ThreeRows>
          </GroupBody>
          <GroupFoot><GroupName $launcher>Clipboard</GroupName><Launcher /></GroupFoot>
        </Group>

        <Group $w={207}>
          <GroupBody $pad={5}>
            <TwoRows>
              <ToolRow>
                <ComboBox $w={112}>Calibri<Caret /></ComboBox>
                <ComboBox $w={43}>10<Caret /></ComboBox>
                <ToolBtn $w={25}><GrowFont $size={16}>A</GrowFont></ToolBtn>
                <ToolBtn $w={18}><GrowFont $size={13} $down>A</GrowFont></ToolBtn>
              </ToolRow>
              <ToolRow>
                <ToolBtn $w={21}><FontGlyph $bold>B</FontGlyph></ToolBtn>
                <ToolBtn $w={22}><FontGlyph $italic>I</FontGlyph></ToolBtn>
                <ToolBtn $w={22}><FontGlyph $bold $under>U</FontGlyph></ToolBtn>
                <ToolBtn $w={12}><Caret /></ToolBtn>
                <VDivider $l={5} $r={4} />
                <ToolBtn $w={20}><BordersIcon /></ToolBtn>
                <ToolBtn $w={16}><Caret /></ToolBtn>
                <VDivider $l={2} $r={2} />
                <ToolBtn $w={24}><FillIcon /></ToolBtn>
                <ToolBtn $w={10}><Caret /></ToolBtn>
                <ToolBtn $w={26}><FontColor>A</FontColor></ToolBtn>
                <ToolBtn $w={8}><Caret /></ToolBtn>
              </ToolRow>
            </TwoRows>
          </GroupBody>
          <GroupFoot><GroupName $launcher>Font</GroupName><Launcher /></GroupFoot>
        </Group>

        <Group $w={265}>
          <GroupBody $pad={5}>
            <TwoRows>
              <ToolRow>
                {ALIGN_V.map((lines, i) => (
                  <ToolBtn key={i} $w={22} $on={i === 1}><AlignIcon lines={lines} /></ToolBtn>
                ))}
                <VDivider $l={4} $r={3} />
                <ToolBtn $w={24}><OrientIcon /></ToolBtn>
                <ToolBtn $w={8}><Caret /></ToolBtn>
                <VDivider $l={16} $r={7} />
                <WrapIcon />
                <ToolText $l={3}>Wrap Text</ToolText>
              </ToolRow>
              <ToolRow>
                {ALIGN_H.map((lines, i) => (
                  <ToolBtn key={i} $w={22} $on={i === 1}><AlignIcon lines={lines} /></ToolBtn>
                ))}
                <VDivider $l={4} $r={3} />
                <ToolBtn $w={22}><IndentIcon dir="out" /></ToolBtn>
                <ToolBtn $w={22}><IndentIcon dir="in" /></ToolBtn>
                <VDivider $l={4} $r={7} />
                <MergeIcon />
                <ToolText $l={3}>Merge &amp; Center</ToolText>
                <Caret $l={9} />
              </ToolRow>
            </TwoRows>
          </GroupBody>
          <GroupFoot><GroupName $launcher>Alignment</GroupName><Launcher /></GroupFoot>
        </Group>

        <Group $w={140}>
          <GroupBody $pad={4}>
            <TwoRows>
              <ToolRow><ComboBox $w={131}>General<Caret /></ComboBox></ToolRow>
              <ToolRow>
                <ToolBtn $w={22}><CurrencyIcon /></ToolBtn>
                <ToolBtn $w={12}><Caret /></ToolBtn>
                <ToolBtn $w={22}><FontGlyph $size={16}>%</FontGlyph></ToolBtn>
                <ToolBtn $w={20}><FontGlyph $size={16} $bold>,</FontGlyph></ToolBtn>
                <VDivider $l={6} $r={0} />
                <ToolBtn $w={28}><DecimalIcon kind="more" /></ToolBtn>
                <ToolBtn $w={20}><DecimalIcon kind="less" /></ToolBtn>
              </ToolRow>
            </TwoRows>
          </GroupBody>
          <GroupFoot><GroupName $launcher>Number</GroupName><Launcher /></GroupFoot>
        </Group>

        <Group $w={688}>
          <GroupBody $pad={3}>
            <BigBtn $w={71}>
              <BigIcon><ConditionalIcon /></BigIcon>
              <BigLabel>Conditional</BigLabel>
              <BigLabel>Formatting<Caret /></BigLabel>
            </BigBtn>
            <BigBtn $w={60}>
              <BigIcon><TableStyleIcon /></BigIcon>
              <BigLabel>Format as</BigLabel>
              <BigLabel>Table<Caret /></BigLabel>
            </BigBtn>
            <Gallery>
              <StyleGrid>
                <NormalSwatch>Normal</NormalSwatch>
                <StyleSwatch $bg="#ffc7ce" $fg="#9c0006">Bad</StyleSwatch>
                <StyleSwatch $bg="#c6efce" $fg="#006100">Good</StyleSwatch>
                <StyleSwatch $bg="#ffeb9c" $fg="#9c6500">Neutral</StyleSwatch>
                <StyleSwatch $bg="#f2f2f2" $fg="#fa7d00" $bd="1px solid #7f7f7f" $bold>Calculation</StyleSwatch>
                <CheckSwatch>Check Cell</CheckSwatch>
                <StyleSwatch $fg="#7f7f7f" $italic>Explanatory ...</StyleSwatch>
                <StyleSwatch $bg="#ffcc99" $fg="#3f3f76" $bd="1px solid #7f7f7f">Input</StyleSwatch>
                <LinkedSwatch>Linked Cell</LinkedSwatch>
                <StyleSwatch $bg="#ffffcc" $bd="1px solid #b2b2b2">Note</StyleSwatch>
              </StyleGrid>
              <GalleryArrows>
                <GalleryArrow $up />
                <GalleryArrow />
                <GalleryArrow />
              </GalleryArrows>
            </Gallery>
          </GroupBody>
          <GroupFoot><GroupName>Styles</GroupName></GroupFoot>
        </Group>

        <Group $w={136}>
          <GroupBody $pad={5}>
            <BigBtn $w={42}>
              <BigIcon><InsertIcon /></BigIcon>
              <BigLabel>Insert</BigLabel>
              <BigLabel><Caret /></BigLabel>
            </BigBtn>
            <BigBtn $w={41}>
              <BigIcon><DeleteIcon /></BigIcon>
              <BigLabel>Delete</BigLabel>
              <BigLabel><Caret /></BigLabel>
            </BigBtn>
            <BigBtn $w={44}>
              <BigIcon><FormatCellIcon /></BigIcon>
              <BigLabel>Format</BigLabel>
              <BigLabel><Caret /></BigLabel>
            </BigBtn>
          </GroupBody>
          <GroupFoot><GroupName>Cells</GroupName></GroupFoot>
        </Group>

        <Group $w={188}>
          <GroupBody $pad={8}>
            <ThreeRows $w={91}>
              <ToolRow><SumIcon /><ToolText>AutoSum</ToolText><Caret $l={12} /></ToolRow>
              <ToolRow><FillDownIcon /><ToolText $l={5}>Fill</ToolText><Caret $l={3} /></ToolRow>
              <ToolRow><EraserIcon /><ToolText>Clear</ToolText><Caret $l={3} /></ToolRow>
            </ThreeRows>
            <BigBtn $w={40}>
              <BigIcon><SortIcon /></BigIcon>
              <BigLabel>Sort &amp;</BigLabel>
              <BigLabel>Filter<Caret /></BigLabel>
            </BigBtn>
            <BigBtn $w={42}>
              <BigIcon><BinocularsIcon /></BigIcon>
              <BigLabel>Find &amp;</BigLabel>
              <BigLabel>Select<Caret /></BigLabel>
            </BigBtn>
          </GroupBody>
          <GroupFoot><GroupName>Editing</GroupName></GroupFoot>
        </Group>

        <CollapseChevron>
          <svg width="11" height="7" viewBox="0 0 11 7"><path d="M1 6l4.5-4.5L10 6" fill="none" stroke="#555" strokeWidth="1.6" /></svg>
        </CollapseChevron>
      </Ribbon>

      <FormulaBar>
        <NameBox>P24<Caret /></NameBox>
        <GripDots><span /><span /><span /></GripDots>
        <FormulaButtons>
          <svg width="17" height="17" viewBox="0 0 17 17"><path d="M2 2l13 13M15 2L2 15" stroke="#bcbcbc" strokeWidth="2.2" /></svg>
          <svg width="19" height="16" viewBox="0 0 19 16"><path d="M1 8l6 6L18 2" fill="none" stroke="#bcbcbc" strokeWidth="2.8" /></svg>
          <FxMark>fx</FxMark>
        </FormulaButtons>
        <FormulaInput>
          <svg width="12" height="8" viewBox="0 0 12 8"><path d="M1 7l5-5 5 5" fill="none" stroke="#666" strokeWidth="2.2" /></svg>
        </FormulaInput>
      </FormulaBar>

      <SheetArea>
        <Sheet>
          <Corner><CornerMark /></Corner>
          {COLUMNS.map((c) => (
            <ColHead key={c} $on={c === "P"} $cut={c === "S"}>{c}</ColHead>
          ))}
          {Array.from({ length: 36 }, (_, idx) => {
            const r = idx + 1;
            const cells = buildRow(r);
            return (
              <React.Fragment key={r}>
                <RowHead $on={r === 24} $tall={r === 23}>{r}</RowHead>
                {cells.map((c, i) => (
                  <Cell key={i} $fill={c.fill} $bold={c.bold} $left={c.left} $span={c.span} $rule={c.rule}>
                    {c.text}
                  </Cell>
                ))}
                {COLUMNS.slice(8).map((c) => (
                  <Cell key={c} $picked={r === 24 && c === "P"} />
                ))}
              </React.Fragment>
            );
          })}
        </Sheet>
        <VScroll>
          <ScrollArrow />
          <ScrollThumb />
          <ScrollArrow $down />
        </VScroll>
      </SheetArea>

      <TabsBar>
        <TabNav><NavArrow /><NavArrow $right /></TabNav>
        {SHEET_TABS.map((t) => (
          <SheetTab key={t.name} $w={t.w} $bg={t.bg} $active={t.active}>{t.name}</SheetTab>
        ))}
        <TabEnd />
        <AddSheet><TabPlus /></AddSheet>
        <SplitDots><span /><span /><span /></SplitDots>
        <HScroll>
          <HScrollBtn />
          <HScrollThumb />
          <HScrollBtn $right />
        </HScroll>
      </TabsBar>

      <StatusBar>
        <ReadyLabel>READY</ReadyLabel>
        <ZoomArea>
          <ViewBtn $on><SheetViewNormal /></ViewBtn>
          <ViewBtn><SheetViewLayout /></ViewBtn>
          <ViewBtn><SheetViewBreak /></ViewBtn>
          <ZoomSign $l={8}>-</ZoomSign>
          <ZoomTrack />
          <ZoomSign>+</ZoomSign>
          <ZoomLabel>120%</ZoomLabel>
        </ZoomArea>
      </StatusBar>

      <Taskbar>
        <StartBtn><WindowsLogo /></StartBtn>
        <SearchBox><SearchGlass />Type here to search</SearchBox>
        <TaskSlot><CortanaRing /></TaskSlot>
        <TaskSlot><TaskViewIcon /></TaskSlot>
        <TaskSlot><WordIcon /></TaskSlot>
        <TaskSlot><StoreIcon /></TaskSlot>
        <TaskSlot $on $open><ExcelTaskIcon /></TaskSlot>
        <TaskSlot><PowerPointIcon /></TaskSlot>
        <TaskSlot><MailIcon /></TaskSlot>
        <TaskSlot><FolderIcon /></TaskSlot>
        <TaskSlot $open><ChromeIcon /></TaskSlot>
        <TaskSlot><SpotifyIcon /></TaskSlot>
        <TaskSlot $open><SwirlIcon /></TaskSlot>
        <Tray>
          <TrayItem $w={30}>
            <svg width="12" height="7" viewBox="0 0 12 7"><path d="M1 6.5l5-5 5 5" fill="none" stroke="#eee" /></svg>
          </TrayItem>
          <TrayItem $w={33}><TrayCloud /></TrayItem>
          <TrayItem $w={30}><TrayMeter /></TrayItem>
          <TrayItem $w={29}><TraySound /></TrayItem>
          <TrayItem $w={38}>ENG</TrayItem>
          <ClockBlock><span>13:06</span><span>02/06/2020</span></ClockBlock>
          <NoteBadge><TrayNote /><NoteCount>7</NoteCount></NoteBadge>
        </Tray>
      </Taskbar>
    </Page>
  );
};

export default App;
